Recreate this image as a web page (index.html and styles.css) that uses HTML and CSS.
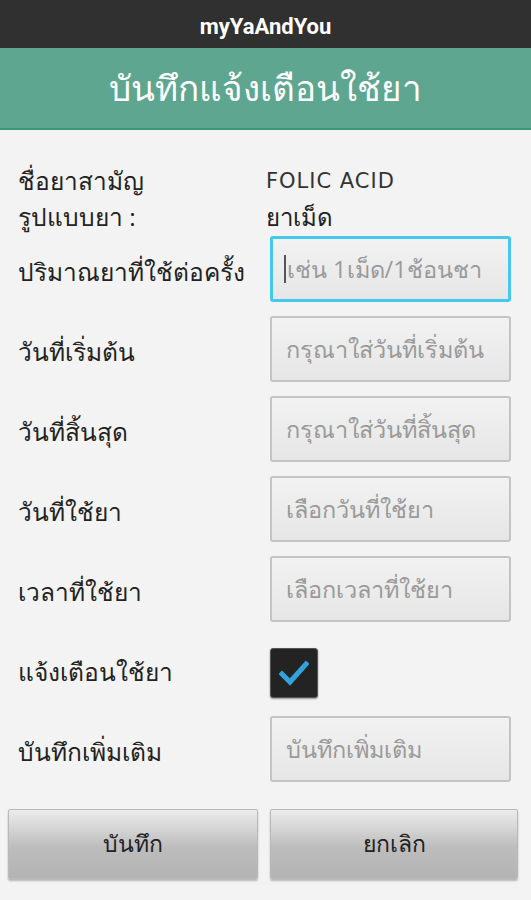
FILE: index.html
```html
<!DOCTYPE html>
<html lang="th">
<head>
    <meta charset="UTF-8">
    <meta name="viewport" content="width=device-width, initial-scale=1.0">
    <title>myYaAndYou</title>
    <link rel="stylesheet" href="styles.css">
</head>
<body>
    <div class="appbar">myYaAndYou</div>
    <div class="header">บันทึกแจ้งเตือนใช้ยา</div>
    <div class="content">
        <div class="info">
            <span class="label">ชื่อยาสามัญ</span>
            <span class="value latin">FOLIC ACID</span>
            <span class="label">รูปแบบยา :</span>
            <span class="value">ยาเม็ด</span>
        </div>
        <form class="form">
            <label class="label" for="dose">ปริมาณยาที่ใช้ต่อครั้ง</label>
            <div class="field focused"><span class="caret"></span><span class="hint">เช่น 1เม็ด/1ช้อนชา</span></div>
            <label class="label">วันที่เริ่มต้น</label>
            <div class="field"><span class="hint">กรุณาใส่วันที่เริ่มต้น</span></div>
            <label class="label">วันที่สิ้นสุด</label>
            <div class="field"><span class="hint">กรุณาใส่วันที่สิ้นสุด</span></div>
            <label class="label">วันที่ใช้ยา</label>
            <div class="field"><span class="hint">เลือกวันที่ใช้ยา</span></div>
            <label class="label">เวลาที่ใช้ยา</label>
            <div class="field"><span class="hint">เลือกเวลาที่ใช้ยา</span></div>
            <label class="label">แจ้งเตือนใช้ยา</label>
            <div class="check-cell">
                <div class="checkbox">
                    <svg width="30" height="26" viewBox="0 0 30 26"><path d="M3 14 L11 22 L27 4" fill="none" stroke="#33a3dc" stroke-width="5" stroke-linecap="square"/></svg>
                </div>
            </div>
            <label class="label">บันทึกเพิ่มเติม</label>
            <div class="field"><span class="hint">บันทึกเพิ่มเติม</span></div>
        </form>
    </div>
    <div class="buttons">
        <button type="button">บันทึก</button>
        <button type="button">ยกเลิก</button>
    </div>
</body>
</html>
```

FILE: styles.css
```css
body {
    margin: 0;
    width: 531px;
    height: 900px;
    background-color: #f3f3f3;
    font-family: "Open Sans", "Noto Sans", sans-serif;
    color: #222;
    overflow: hidden;
}
.appbar {
    height: 48px;
    background-color: #303030;
    color: #fff;
    font-family: Roboto, sans-serif;
    font-weight: bold;
    font-size: 22px;
    display: flex;
    align-items: center;
    justify-content: center;
    padding-top: 4px;
    box-sizing: border-box;
}
.header {
    height: 82px;
    background-color: #5ea690;
    border-bottom: 2px solid #3f957a;
    box-sizing: border-box;
    color: #fff;
    font-size: 35px;
    display: flex;
    align-items: center;
    justify-content: center;
}
.content {
    padding: 34px 20px 0 18px;
}
.info {
    display: grid;
    grid-template-columns: 248px 1fr;
    row-gap: 2px;
    font-size: 24px;
    line-height: 34px;
}
.value.latin {
    font-family: "DejaVu Sans", sans-serif;
    font-size: 21px;
    letter-spacing: 1px;
    color: #333;
}
.form {
    display: grid;
    grid-template-columns: 252px 241px;
    row-gap: 14px;
    align-items: center;
    margin-top: 2px;
}
.label {
    font-size: 24.5px;
    color: #222;
    white-space: nowrap;
}
.form .label {
    padding-top: 6px;
}
.field {
    height: 66px;
    box-sizing: border-box;
    border: 2px solid #c4c4c4;
    border-radius: 3px;
    background: linear-gradient(#f2f2f2, #e6e6e6);
    display: flex;
    align-items: center;
    padding-left: 14px;
    position: relative;
}
.field.focused {
    border: 3px solid #45c8ee;
    padding-left: 13px;
}
.caret {
    width: 2px;
    height: 28px;
    background-color: #555;
    margin-right: 1px;
    margin-left: -2px;
}
.hint {
    font-size: 23.5px;
    color: #9a9a9a;
    white-space: nowrap;
}
.check-cell {
    height: 66px;
    display: flex;
    align-items: center;
}
.checkbox {
    width: 48px;
    height: 50px;
    margin-top: 8px;
    box-sizing: border-box;
    background-color: #232323;
    border: 1px solid #555;
    border-radius: 3px;
    box-shadow: 0 1px 2px rgba(0, 0, 0, 0.4);
    display: flex;
    align-items: center;
    justify-content: center;
}
.buttons {
    display: grid;
    grid-template-columns: 250px 248px;
    column-gap: 12px;
    padding: 0 0 0 8px;
    margin-top: 27px;
}
.buttons button {
    height: 70px;
    border: 1px solid #b9b9b9;
    border-radius: 2px;
    background: linear-gradient(#ececec, #bdbdbd 55%, #b3b3b3);
    box-shadow: 0 2px 2px rgba(0, 0, 0, 0.25);
    font-family: inherit;
    font-size: 23px;
    color: #222;
}
```
